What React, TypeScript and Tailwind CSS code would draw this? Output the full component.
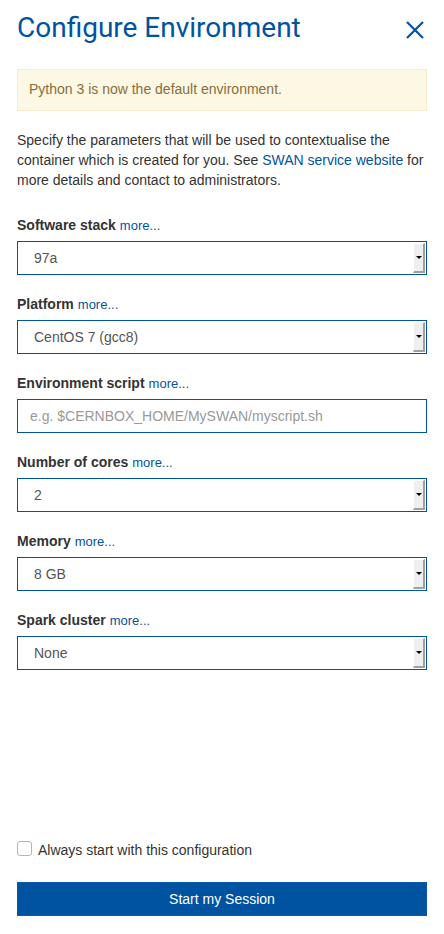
import React, { useState } from 'react';

const fields = [
    { label: 'Software stack', value: '97a', kind: 'select' },
    { label: 'Platform', value: 'CentOS 7 (gcc8)', kind: 'select' },
    { label: 'Environment script', value: 'e.g. $CERNBOX_HOME/MySWAN/myscript.sh', kind: 'input' },
    { label: 'Number of cores', value: '2', kind: 'select' },
    { label: 'Memory', value: '8 GB', kind: 'select' },
    { label: 'Spark cluster', value: 'None', kind: 'select' },
];

const SelectBox = ({ value }: { value: string }) => (
    <div className="flex h-[34px] items-stretch border border-[#0053a1] bg-white">
        <span className="flex flex-1 items-center pl-4 text-[14px] text-[#555]">{value}</span>
        {/* native-looking dropdown arrow button */}
        <div className="my-px mr-px flex w-[12px] items-center justify-center border-t border-l border-white border-r-2 border-b-2 border-r-[#a0a0a0] border-b-[#a0a0a0] bg-[#efefef]">
            <div className="h-0 w-0 border-x-[3px] border-t-[3px] border-x-transparent border-t-black" />
        </div>
    </div>
);

const App = () => {
    const [always, setAlways] = useState<boolean>(false);

    return (
        <div className="flex min-h-screen flex-col bg-white px-[17px] pb-[18px] font-['Liberation_Sans',Arial,sans-serif] text-[14px] text-[#333]">
            {/* Header */}
            <div className="flex items-center justify-between pt-[11px]">
                <h1 className="font-['Roboto',sans-serif] text-[28px] leading-[34px] text-[#0053a1]">Configure Environment</h1>
                <svg width="20" height="20" viewBox="0 0 20 20" className="mr-[2px] mt-[4px]">
                    <path d="M2 2 L18 18 M18 2 L2 18" stroke="#0053a1" strokeWidth="2.2" fill="none" />
                </svg>
            </div>

            {/* Notice */}
            <div className="mt-[24px] flex h-[42px] items-center border border-[#faebcc] bg-[#fcf8e3] px-[11px] pb-px text-[#8a6d3b]">
                Python 3 is now the default environment.
            </div>

            <p className="mt-[19px] leading-[20px]">
                Specify the parameters that will be used to contextualise the container which is created for you. See{' '}
                <a className="text-[#0053a1]">SWAN service website</a> for more details and contact to administrators.
            </p>

            {/* Form fields */}
            <div className="mt-[25px] flex flex-col gap-[19px]">
                {fields.map((f) => (
                    <div key={f.label} className="flex flex-col gap-[6px]">
                        <div className="flex h-[20px] items-baseline gap-[4px] leading-[20px]">
                            <span className="font-bold">{f.label}</span>
                            <a className="text-[13px] text-[#0053a1]">more...</a>
                        </div>
                        {f.kind === 'select' ? (
                            <SelectBox value={f.value} />
                        ) : (
                            <div className="flex h-[34px] items-center border border-[#0053a1] bg-white pl-[12px] text-[14px] text-[#999]">
                                {f.value}
                            </div>
                        )}
                    </div>
                ))}
            </div>

            <div className="flex-1" />

            {/* Footer */}
            <label className="flex cursor-pointer items-center gap-[6px]">
                <input
                    type="checkbox"
                    checked={always}
                    onChange={(e) => setAlways(e.target.checked)}
                    className="hidden"
                />
                <span className="mb-[2px] h-[15px] w-[15px] rounded-[3px] border border-[#b5b5b5] bg-white" />
                <span className="pt-px leading-[20px]">Always start with this configuration</span>
            </label>

            <button className="mt-[22px] h-[34px] w-full border border-[#0a58a8] bg-[#0053a1] text-[14px] text-white">
                Start my Session
            </button>
        </div>
    );
};

export default App;
